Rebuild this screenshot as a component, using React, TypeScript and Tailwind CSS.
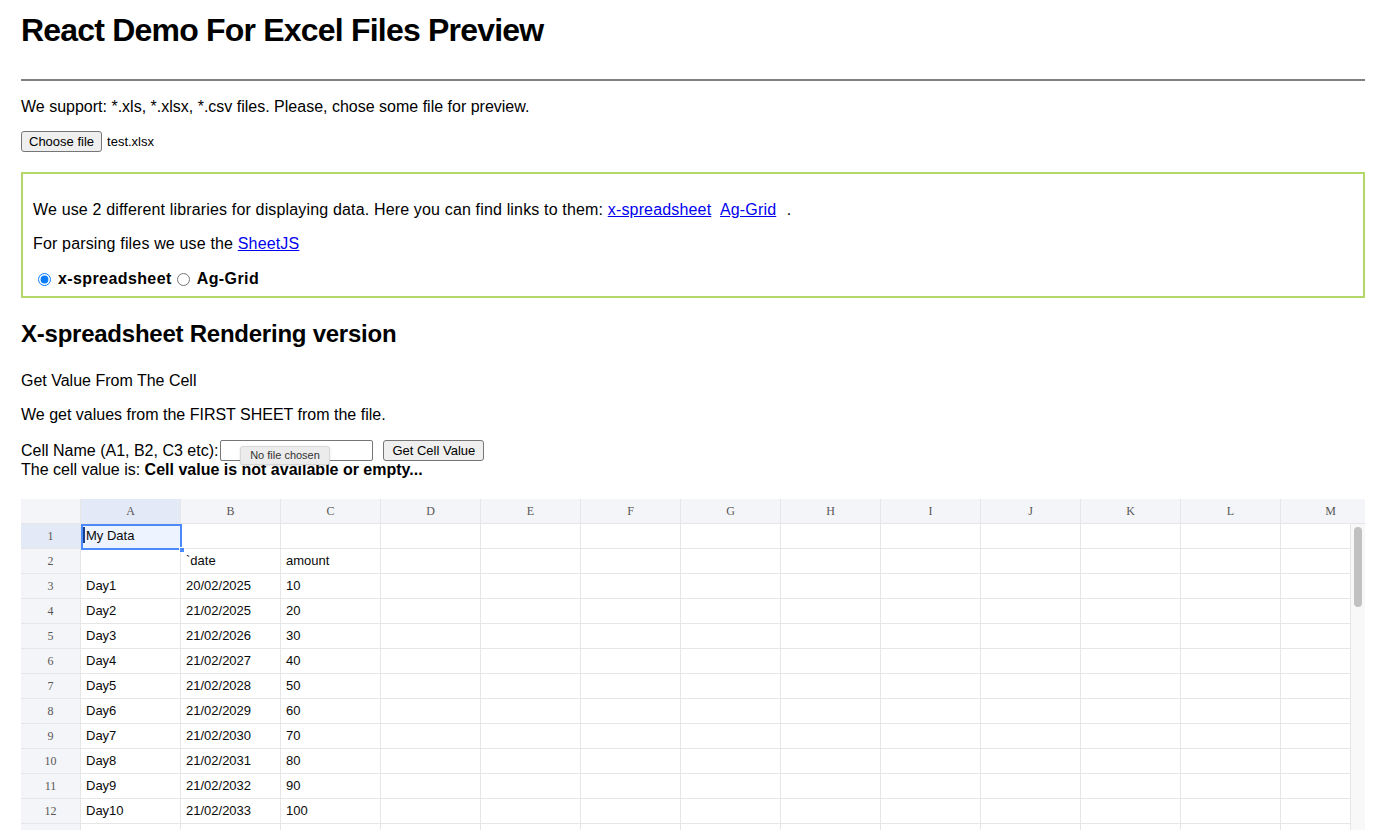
import React from "react";

const COLS = ["A", "B", "C", "D", "E", "F", "G", "H", "I", "J", "K", "L", "M"];

const rows: string[][] = [
  ["My Data", "", ""],
  ["", "`date", "amount"],
  ["Day1", "20/02/2025", "10"],
  ["Day2", "21/02/2025", "20"],
  ["Day3", "21/02/2026", "30"],
  ["Day4", "21/02/2027", "40"],
  ["Day5", "21/02/2028", "50"],
  ["Day6", "21/02/2029", "60"],
  ["Day7", "21/02/2030", "70"],
  ["Day8", "21/02/2031", "80"],
  ["Day9", "21/02/2032", "90"],
  ["Day10", "21/02/2033", "100"],
  ["", "", ""],
];

function Sheet() {
  return (
    <div className="relative mt-[20px] h-[331px] w-[1344px] overflow-hidden bg-white">
      <div className="grid w-max grid-cols-[60px_repeat(13,100px)]">
        {/* header */}
        <div className="h-[25px] border-r border-b border-[#e6e6e6] bg-[#f4f5f8]" />
        {COLS.map((c, i) => (
          <div
            key={c}
            className={
              "flex h-[25px] items-center justify-center border-r border-b border-[#e6e6e6] font-['Liberation_Serif',serif] text-[12px] text-[#585757] " +
              (i === 0 ? "bg-[#e3e9f6]" : "bg-[#f4f5f8]")
            }
          >
            {c}
          </div>
        ))}
        {rows.map((r, ri) => (
          <React.Fragment key={ri}>
            <div
              className={
                "flex h-[25px] items-center justify-center border-r border-b border-[#e6e6e6] font-['Liberation_Serif',serif] text-[12px] text-[#585757] " +
                (ri === 0 ? "bg-[#e3e9f6]" : "bg-[#f4f5f8]")
              }
            >
              {ri < 12 ? ri + 1 : ""}
            </div>
            {COLS.map((c, ci) => (
              <div
                key={c}
                className={
                  "flex h-[25px] items-center border-r border-b border-[#e6e6e6] pl-[5px] text-[13px] text-[#0a0a0a] " +
                  (ri === 0 && ci === 0 ? "bg-[#edf3ff]" : "")
                }
              >
                {r[ci] ?? ""}
              </div>
            ))}
          </React.Fragment>
        ))}
      </div>

      {/* selection A1 */}
      <div className="pointer-events-none absolute left-[60px] top-[25px] h-[26px] w-[101px] border-2 border-[#4b89ff]">
        <div className="absolute left-[0px] top-[1px] h-[16px] w-[2px] bg-[#1c3f8c]" />
        <div className="absolute -right-[5px] -bottom-[5px] h-[6px] w-[6px] border border-white bg-[#4b89ff]" />
      </div>

      {/* vertical scrollbar */}
      <div className="absolute right-0 top-[25px] bottom-0 w-[15px] border-l border-[#e6e6e6] bg-[#f8f8f8]">
        <div className="mx-auto mt-[3px] h-[80px] w-[8px] rounded-full bg-[#c1c1c1]" />
      </div>
    </div>
  );
}

export default function App() {
  return (
    <div className="min-h-screen bg-white pl-[21px] pr-[18px] font-['Liberation_Sans',Arial,sans-serif] text-black">
      <h1 className="mt-[11px] text-[32px] leading-[38px] font-bold tracking-[-0.025em]">
        React Demo For Excel Files Preview
      </h1>
      <hr className="mt-[30px] border-t-2 border-[#808080]" />
      <p className="mt-[14px] text-[16px] leading-[24px]">
        We support: *.xls, *.xlsx, *.csv files. Please, chose some file for preview.
      </p>
      <div className="mt-[12px] flex h-[21px] items-center gap-[4px] text-[13px]">
        <button className="h-[21px] rounded-[3px] border border-[#767676] bg-[#efefef] px-[7px] text-[13px] leading-none">
          Choose file
        </button>
        <span className="ml-[1px]">test.xlsx</span>
      </div>

      <div className="mt-[20px] border-2 border-[#b4d867] px-[10px] pt-[24px] pb-[5px] text-[16px] leading-[24px] tracking-[0.01em]">
        <p>
          We use 2 different libraries for displaying data. Here you can find links to them:{" "}
          <a href="#" className="mr-[5px] text-[#0000ee] underline">
            x-spreadsheet
          </a>{" "}
          <a href="#" className="mr-[6px] text-[#0000ee] underline">
            Ag-Grid
          </a>{" "}
          .
        </p>
        <p className="mt-[10px]">
          For parsing files we use the{" "}
          <a href="#" className="text-[#0000ee] underline">
            SheetJS
          </a>
        </p>
        <div className="mt-[11px] flex items-center font-bold tracking-[0.025em]">
          <input type="radio" name="lib" defaultChecked className="mt-0 mr-[7px] ml-[5px] h-[13px] w-[13px] accent-[#0a7cff]" />
          <span className="mr-[5px]">x-spreadsheet</span>
          <input type="radio" name="lib" className="mt-0 mr-[7px] ml-0 h-[13px] w-[13px]" />
          <span>Ag-Grid</span>
        </div>
      </div>

      <h2 className="mt-[21px] text-[24px] leading-[30px] font-bold tracking-[-0.01em]">
        X-spreadsheet Rendering version
      </h2>
      <p className="mt-[20px] text-[16px] leading-[24px]">Get Value From The Cell</p>
      <p className="mt-[10px] text-[16px] leading-[24px]">We get values from the FIRST SHEET from the file.</p>

      <div className="relative mt-[13px] flex h-[21px] items-center text-[16px]">
        <span>Cell Name (A1, B2, C3 etc):</span>
        <input
          type="text"
          className="ml-[2px] h-[21px] w-[153px] rounded-[2px] border border-[#767676] bg-white px-1 text-[13px]"
        />
        <button className="ml-[10px] h-[21px] rounded-[3px] border border-[#767676] bg-[#efefef] px-[8px] text-[13px] leading-none">
          Get Cell Value
        </button>
        <div className="absolute left-[219px] top-[6px] flex h-[19px] w-[90px] items-center justify-center rounded-[3px] border border-[#d8d8d8] bg-[#ececec] text-[11px] text-[#333] shadow-sm">
          No file chosen
        </div>
      </div>
      <p className="text-[16px] leading-[18px]">
        The cell value is: <b>Cell value is not available or empty...</b>
      </p>

      <Sheet />
    </div>
  );
}
